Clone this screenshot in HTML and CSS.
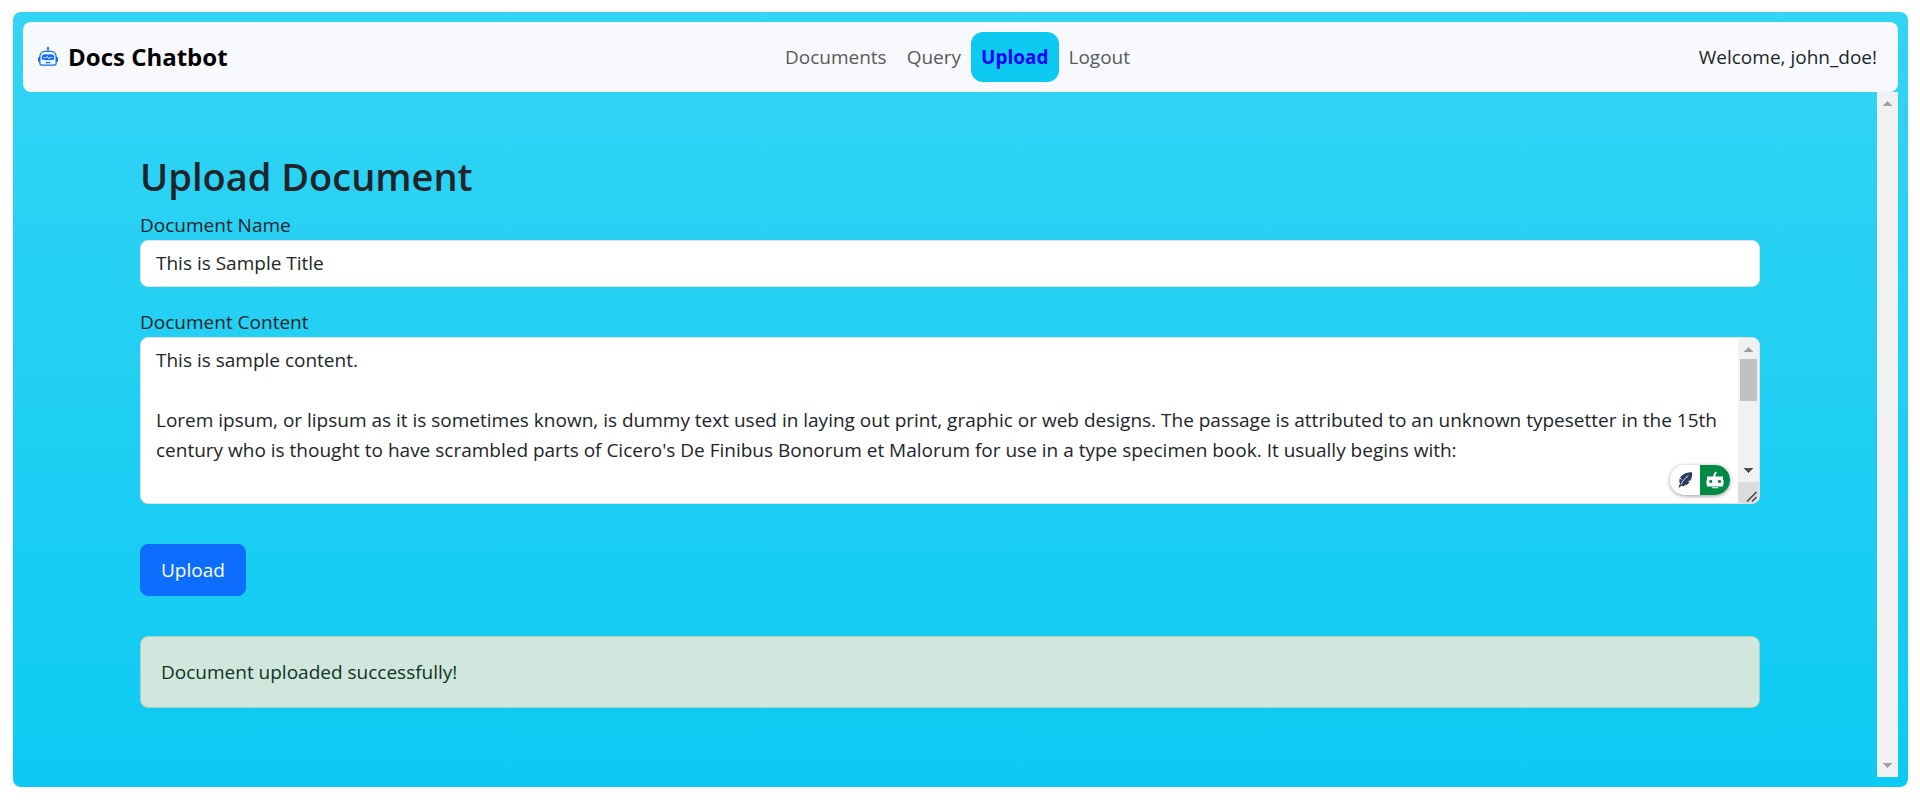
FILE: index.html
```html
<!DOCTYPE html>
<html lang="en">
<head>
  <meta charset="utf-8">
  <meta name="viewport" content="width=device-width, initial-scale=1">
  <title>Docs Chatbot</title>
  <link rel="stylesheet" href="styles.css">
</head>
<body>
  <div class="app">
    <header class="navbar">
      <a class="brand" href="#">
        <svg class="brand-icon" viewBox="0 0 16 16" fill="currentColor" aria-hidden="true">
          <path d="M6 12.5a.5.5 0 0 1 .5-.5h3a.5.5 0 0 1 0 1h-3a.5.5 0 0 1-.5-.5M3 8.062C3 6.76 4.235 5.765 5.53 5.886a26.6 26.6 0 0 0 4.94 0C11.765 5.765 13 6.76 13 8.062v1.157a.93.93 0 0 1-.765.935c-.845.147-2.34.346-4.235.346s-3.39-.2-4.235-.346A.93.93 0 0 1 3 9.219zm4.542-.827a.25.25 0 0 0-.217.068l-.92.9a25 25 0 0 1-1.871-.183.25.25 0 0 0-.068.495c.55.076 1.232.149 2.02.193a.25.25 0 0 0 .189-.071l.754-.736.847 1.71a.25.25 0 0 0 .404.062l.932-.97a25 25 0 0 0 1.922-.188.25.25 0 0 0-.068-.495c-.538.074-1.207.145-1.98.189a.25.25 0 0 0-.166.076l-.754.785-.842-1.7a.25.25 0 0 0-.182-.135"/>
          <path d="M8.5 1.866a1 1 0 1 0-1 0V3h-2A4.5 4.5 0 0 0 1 7.5V8a1 1 0 0 0-1 1v2a1 1 0 0 0 1 1v1a2 2 0 0 0 2 2h10a2 2 0 0 0 2-2v-1a1 1 0 0 0 1-1V9a1 1 0 0 0-1-1v-.5A4.5 4.5 0 0 0 10.5 3h-2zM14 7.5V13a1 1 0 0 1-1 1H3a1 1 0 0 1-1-1V7.5A3.5 3.5 0 0 1 5.5 4h5A3.5 3.5 0 0 1 14 7.5"/>
        </svg>
        <span>Docs Chatbot</span>
      </a>
      <nav class="nav-links">
        <a class="nav-link" href="#">Documents</a>
        <a class="nav-link" href="#">Query</a>
        <a class="nav-link active" href="#" aria-current="page">Upload</a>
        <a class="nav-link" href="#">Logout</a>
      </nav>
      <span class="welcome">Welcome, john_doe!</span>
    </header>

    <div class="body">
      <main class="content">
        <div class="container">
          <h1 class="title">Upload Document</h1>
          <form class="form">
            <div class="field">
              <label for="doc-name">Document Name</label>
              <input class="control" id="doc-name" type="text" value="This is Sample Title">
            </div>
            <div class="field">
              <label for="doc-content">Document Content</label>
              <div class="textarea-wrap">
                <textarea class="control" id="doc-content" rows="5" spellcheck="false">This is sample content.

Lorem ipsum, or lipsum as it is sometimes known, is dummy text used in laying out print, graphic or web designs. The passage is attributed to an unknown typesetter in the 15th century who is thought to have scrambled parts of Cicero's De Finibus Bonorum et Malorum for use in a type specimen book. It usually begins with:</textarea>
                <div class="area-scroll" aria-hidden="true">
                  <svg class="arrow" viewBox="0 0 21 21" shape-rendering="crispEdges"><path fill="#a3a3a3" d="M10 9h1v1h1v1h1v1h1v1h1v1H6v-1h1v-1h1v-1h1v-1h1z"/></svg>
                  <div class="thumb"></div>
                  <svg class="arrow arrow-end" viewBox="0 0 21 21" shape-rendering="crispEdges"><path fill="#505050" d="M6 7h9v1h-1v1h-1v1h-1v1h-1v1h-1v-1H9v-1H8V9H7V8H6z"/></svg>
                  <svg class="grip" viewBox="0 0 21 21"><path stroke="#404040" stroke-width="1.5" fill="none" d="M9 19.500 18.500 10M14 19.500l4.500-4.500"/></svg>
                </div>
                <div class="assist">
                  <button class="assist-btn" type="button" aria-label="Rephrase text">
                    <svg viewBox="0 0 30 30"><path fill="#2b3a5c" d="M9.500 22.500c-.8.300-1-.3-.7-1l1.200-3c-2-4 1-8.500 5-10 2-.8 5-1.500 7-1.300.4 3-.3 6-1.500 8.300l-2.600.5 1.600.9c-.8 1.300-1.800 2.400-3 3.100l-2.500-.2 1 1c-1.300.5-2.700.4-3.700 0z"/><path stroke="#fff" stroke-width="0.900" fill="none" d="M11 19.500c1.500-3.500 4-6.500 7.500-9M10 13l1.600 1.800"/></svg>
                  </button>
                  <button class="assist-btn assist-bot" type="button" aria-label="Assistant">
                    <svg viewBox="0 0 30 30"><path fill="#fff" fill-rule="evenodd" d="M7 11.500h6.200c.1-2 1-3.800 2.600-5l1.300 1c-1.100 1-1.700 2.400-1.800 4H23v3.800h.6v4.200H23v2H7v-2h-.6v-4.200H7zM10.800 14.800a1.600 1.600 0 1 0 0 3.200 1.600 1.600 0 0 0 0-3.200zm8.700 0a1.600 1.600 0 1 0 0 3.200 1.600 1.600 0 0 0 0-3.200zM12 22.300h6.300v1H12z"/></svg>
                  </button>
                </div>
              </div>
            </div>
            <button class="submit" type="submit">Upload</button>
          </form>
          <div class="alert" role="alert">Document uploaded successfully!</div>
        </div>
      </main>
      <div class="page-scroll" aria-hidden="true">
        <svg class="arrow" viewBox="0 0 21 21" shape-rendering="crispEdges"><path fill="#a3a3a3" d="M10 9h1v1h1v1h1v1h1v1h1v1H6v-1h1v-1h1v-1h1v-1h1z"/></svg>
        <svg class="arrow" viewBox="0 0 21 21" shape-rendering="crispEdges"><path fill="#a3a3a3" d="M6 7h9v1h-1v1h-1v1h-1v1h-1v1h-1v-1H9v-1H8V9H7V8H6z"/></svg>
      </div>
    </div>
  </div>
</body>
</html>
```

FILE: styles.css
```css
* {
  box-sizing: border-box;
}

body {
  margin: 0;
  min-height: 100vh;
  padding: 12px 12px 20px 13px;
  display: flex;
  background: #fff;
  color: #212529;
  font-family: "Segoe UI", "Open Sans", "Noto Sans", sans-serif;
  font-size: 19px;
  line-height: 30px;
}

.app {
  flex: 1;
  min-width: 0;
  padding: 10px;
  display: flex;
  flex-direction: column;
  border-radius: 8px;
  background: linear-gradient(#33d4f4, #0dcaf2);
}

.navbar {
  display: grid;
  grid-template-columns: 1fr auto 1fr;
  align-items: center;
  padding: 10px 21px 10px 15px;
  border-radius: 8px;
  background: #f8f9fc;
}

.brand {
  display: flex;
  align-items: center;
  gap: 10px;
  color: #000;
  font-size: 24px;
  font-weight: 700;
  text-decoration: none;
}

.brand-icon {
  width: 20px;
  height: 20px;
  color: #0d6efd;
}

.nav-links {
  display: flex;
}

.nav-link {
  padding: 10px;
  border-radius: 12px;
  color: #595a5b;
  text-decoration: none;
}

.nav-link.active {
  background: #0dcaf0;
  color: #00f;
  font-weight: 700;
}

.welcome {
  justify-self: end;
}

.body {
  flex: 1;
  display: flex;
}

.content {
  flex: 1;
  min-width: 0;
  padding: 60px 0;
}

.container {
  max-width: 1650px;
  margin: 0 auto;
  padding: 0 15px;
}

.title {
  margin: 0 0 10px;
  font-size: 38px;
  line-height: 48px;
  font-weight: 600;
}

.form {
  display: flex;
  flex-direction: column;
  align-items: flex-start;
  gap: 20px;
}

.field {
  width: 100%;
}

.field label {
  display: block;
}

.control {
  display: block;
  width: 100%;
  margin: 0;
  padding: 7px 15px 8px;
  border: 1px solid #dee2e6;
  border-radius: 8px;
  background: #fff;
  color: inherit;
  font: inherit;
}

.textarea-wrap {
  position: relative;
}

textarea.control {
  padding-right: 36px;
  resize: none;
  overflow-y: scroll;
  scrollbar-width: none;
}

.area-scroll {
  position: absolute;
  top: 1px;
  right: 1px;
  bottom: 1px;
  display: flex;
  flex-direction: column;
  width: 21px;
  overflow: hidden;
  border-radius: 0 7px 7px 0;
  background: #f1f1f1;
}

.arrow {
  flex: none;
  display: block;
  width: 21px;
  height: 21px;
}

.arrow-end {
  margin-top: auto;
}

.thumb {
  height: 42px;
  margin: 0 2px;
  background: #c1c1c1;
}

.grip {
  flex: none;
  width: 21px;
  height: 21px;
  background: #dcdcdc;
}

.assist {
  position: absolute;
  right: 30px;
  bottom: 9px;
  display: flex;
  overflow: hidden;
  border-radius: 15px;
  background: #fff;
  box-shadow: 0 1px 4px rgba(0, 0, 0, 0.4);
}

.assist-btn {
  width: 30px;
  height: 30px;
  padding: 0;
  border: 0;
  background: #fff;
}

.assist-btn svg {
  display: block;
}

.assist-bot {
  background: #008a45;
}

.submit {
  margin-top: 20px;
  padding: 10px 20px;
  border: 1px solid #0d6efd;
  border-radius: 8px;
  background: #0d6efd;
  color: #fff;
  font: inherit;
}

.alert {
  margin-top: 40px;
  padding: 20px;
  border: 1px solid #a3cfbb;
  border-radius: 8px;
  background: #d1e7dd;
  color: #0a3622;
}

.page-scroll {
  display: flex;
  flex-direction: column;
  justify-content: space-between;
  background: #f1f1f1;
}
```
